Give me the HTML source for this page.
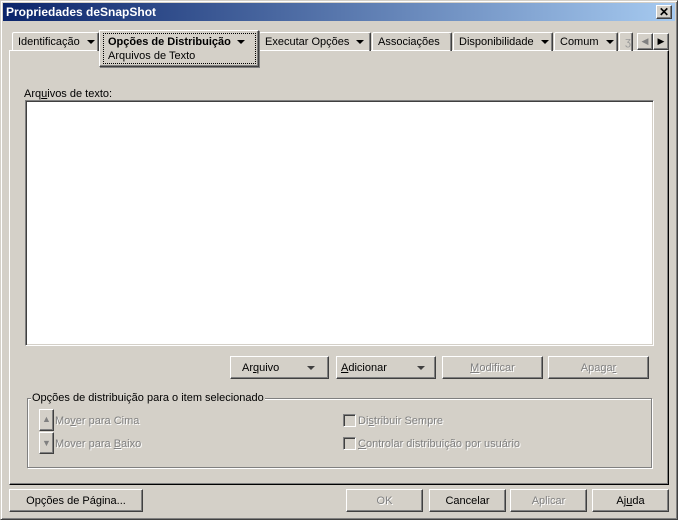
<!DOCTYPE html>
<html><head><meta charset="utf-8"><style>
*{box-sizing:border-box;margin:0;padding:0}
body{width:678px;height:520px;background:#d4d0c8;font:11px "Liberation Sans",sans-serif;color:#000;position:relative;overflow:hidden}
.a{position:absolute}
.win{left:0;top:0;width:678px;height:520px;border:1px solid;border-color:#d4d0c8 #404040 #404040 #d4d0c8;box-shadow:inset 1px 1px #fff,inset -1px -1px #808080}
.title{left:3px;top:3px;width:672px;height:18px;background:linear-gradient(90deg,#0a246a,#a6caf0);color:#fff;font-weight:bold;font-size:12px;line-height:18px;padding-left:3px}
.btn{position:absolute;background:#d4d0c8;border:1px solid;border-color:#fff #404040 #404040 #fff;box-shadow:inset -1px -1px #808080;text-align:center;line-height:23px}
.dis{color:#808080;text-shadow:1px 1px #fff}
.tab{position:absolute;top:32px;height:19px;border:1px solid;border-bottom:none;border-color:#fff #404040 #404040 #fff;box-shadow:inset -1px 0 #808080;border-radius:2px 2px 0 0;line-height:19px;padding-left:5px;white-space:nowrap}
.arr{display:inline-block;width:0;height:0;border-left:4px solid transparent;border-right:4px solid transparent;border-top:4px solid #000;vertical-align:middle;margin-left:7px}
u{text-decoration:underline}
</style></head><body>
<div class="a win"></div>
<div class="a title">Propriedades deSnapShot</div>
<div class="btn" style="left:656px;top:5px;width:16px;height:14px;line-height:12px;font-weight:bold;font-size:12px">✕</div>

<div class="a" style="left:9px;top:50px;width:660px;height:435px;border:1px solid;border-color:#fff #000 #000 #fff;box-shadow:inset -1px -1px #808080"></div>

<div class="tab" style="left:12px;width:87px">Identificação<span class="arr"></span></div>
<div class="tab" style="left:259px;width:112px">Executar Opções<span class="arr"></span></div>
<div class="tab" style="left:372px;width:80px">Associações</div>
<div class="tab" style="left:453px;width:100px">Disponibilidade<span class="arr"></span></div>
<div class="tab" style="left:554px;width:64px">Comum<span class="arr"></span></div>
<div class="tab" style="left:619px;width:14px;color:#999">ʒ</div>
<div class="btn" style="left:637px;top:33px;width:16px;height:17px;line-height:15px;font-size:9px;color:#808080">◀</div>
<div class="btn" style="left:653px;top:33px;width:16px;height:17px;line-height:15px;font-size:9px">▶</div>

<div class="a" style="left:99px;top:30px;width:160px;height:37px;background:#d4d0c8;border:1px solid;border-color:#fff #404040 #404040 #fff;box-shadow:inset -1px -1px #808080,1px 1px #808080"></div>
<div class="a" style="left:103px;top:33px;width:153px;height:31px;border:1px dotted #000"></div>
<div class="a" style="left:108px;top:36px;font-weight:bold">Opções de Distribuição<span class="arr" style="margin-left:6px"></span></div>
<div class="a" style="left:108px;top:50px">Arquivos de Texto</div>

<div class="a" style="left:24px;top:88px">Arq<u>u</u>ivos de texto:</div>
<div class="a" style="left:25px;top:100px;width:629px;height:246px;background:#fff;border:1px solid;border-color:#808080 #fff #fff #808080;box-shadow:inset 1px 1px #404040,inset -1px -1px #d4d0c8"></div>

<div class="btn" style="left:230px;top:356px;width:99px;height:23px;text-align:left;padding-left:11px">Ar<u>q</u>uivo<span class="arr" style="margin-left:28px;border-top-color:#404040"></span></div>
<div class="btn" style="left:336px;top:356px;width:100px;height:23px;text-align:left;padding-left:4px"><u>A</u>dicionar<span class="arr" style="margin-left:30px;border-top-color:#404040"></span></div>
<div class="btn dis" style="left:442px;top:356px;width:101px;height:23px"><u>M</u>odificar</div>
<div class="btn dis" style="left:548px;top:356px;width:101px;height:23px">Apaga<u>r</u></div>

<div class="a" style="left:27px;top:398px;width:625px;height:70px;border:1px solid #808080;box-shadow:1px 1px #fff,inset 1px 1px #fff"></div>
<div class="a" style="left:31px;top:392px;background:#d4d0c8;padding:0 1px">Opções de distribuição para o item selecionado</div>
<div class="btn" style="left:39px;top:409px;width:15px;height:22px;line-height:18px;font-size:9px;color:#808080">▲</div>
<div class="btn" style="left:39px;top:432px;width:15px;height:22px;line-height:20px;font-size:9px;color:#808080">▼</div>
<div class="a dis" style="left:55px;top:415px">Mo<u>v</u>er para Cima</div>
<div class="a dis" style="left:55px;top:438px">Mover para <u>B</u>aixo</div>
<div class="a" style="left:343px;top:414px;width:13px;height:13px;border:1px solid;border-color:#808080 #fff #fff #808080;box-shadow:inset 1px 1px #404040"></div>
<div class="a" style="left:343px;top:437px;width:13px;height:13px;border:1px solid;border-color:#808080 #fff #fff #808080;box-shadow:inset 1px 1px #404040"></div>
<div class="a dis" style="left:358px;top:415px">Di<u>s</u>tribuir Sempre</div>
<div class="a dis" style="left:358px;top:438px"><u>C</u>ontrolar distribuição por usuário</div>

<div class="btn" style="left:9px;top:489px;width:134px;height:23px">Opções de Pá<u>g</u>ina...</div>
<div class="btn dis" style="left:346px;top:489px;width:77px;height:23px">OK</div>
<div class="btn" style="left:429px;top:489px;width:77px;height:23px">Cancelar</div>
<div class="btn dis" style="left:510px;top:489px;width:77px;height:23px">Aplicar</div>
<div class="btn" style="left:592px;top:489px;width:77px;height:23px">Aj<u>u</u>da</div>
</body></html>
